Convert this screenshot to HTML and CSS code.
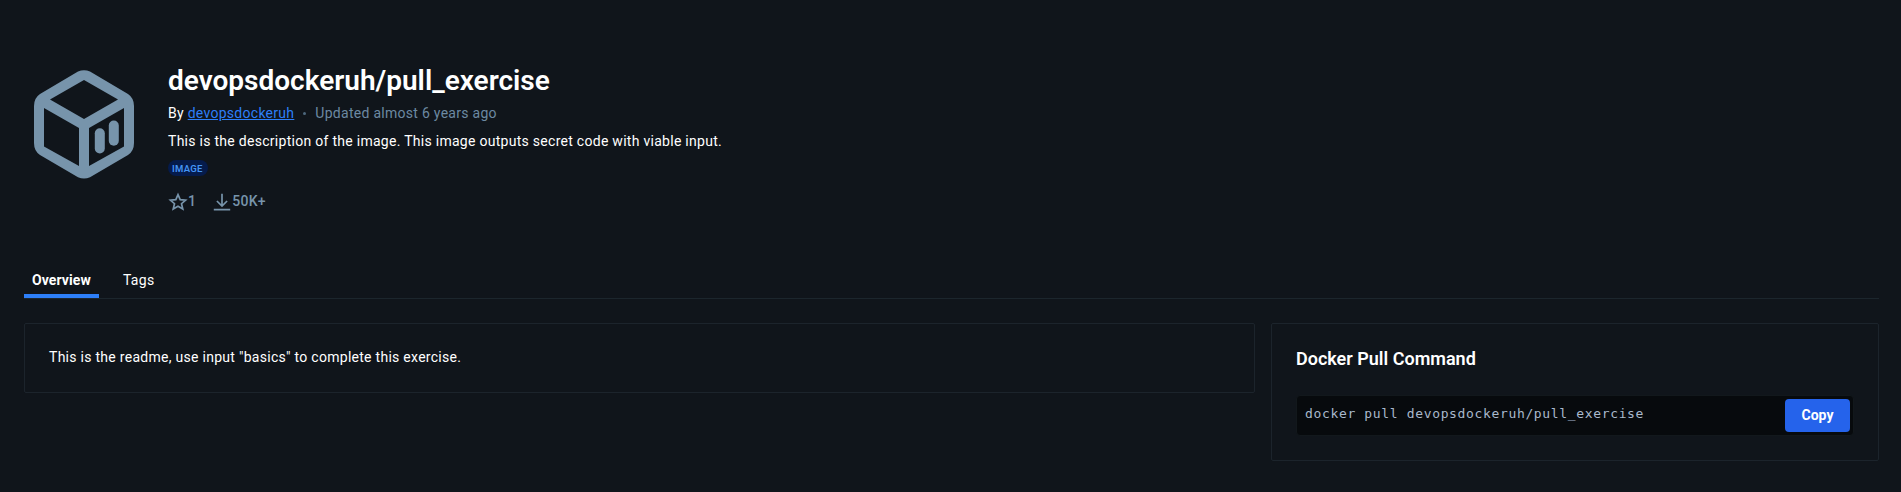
FILE: index.html
```html
<!DOCTYPE html>
<html lang="en">
<head>
<meta charset="utf-8">
<title>devopsdockeruh/pull_exercise</title>
<link rel="stylesheet" href="styles.css">
</head>
<body>
<header class="repo">
  <svg class="repo-logo" viewBox="0 0 100 109">
    <path fill-rule="evenodd" d="M44 1.6Q50-1 56 1.6L94 24Q100 28 100 36V73Q100 81 94 85L56 107.2Q50 109.8 44 107.2L6 85Q0 81 0 73V36Q0 28 6 24ZM50 10L16 29.5 50 49 84 29.5ZM10 38V76.5L45 96V58ZM90 38L55 58V96L90 76.5Z"/>
    <rect x="60.8" y="58.3" width="10" height="25.2" rx="5"/>
    <rect x="74.8" y="50.6" width="10" height="25.2" rx="5"/>
  </svg>
  <div class="repo-info">
    <h1 class="repo-title">devopsdockeruh/pull_exercise</h1>
    <div class="byline"><span>By <a class="owner" href="#">devopsdockeruh</a></span><span class="dot"></span><span class="updated">Updated almost 6 years ago</span></div>
    <p class="description">This is the description of the image. This image outputs secret code with viable input.</p>
    <span class="badge">IMAGE</span>
    <div class="stats">
      <span class="stat"><svg class="stat-icon" viewBox="0 0 20 20"><path d="M10 2.6L12.2 7.6 17.6 8.1 13.5 11.7 14.8 17.1 10 14.3 5.2 17.1 6.5 11.7 2.4 8.1 7.8 7.6Z"/></svg><span>1</span></span>
      <span class="stat"><svg class="stat-icon" viewBox="0 0 20 20"><path d="M10 1.8V14M4.9 9L10 14.1 15.1 9M1.8 17.7H18.2"/></svg><span>50K+</span></span>
    </div>
  </div>
</header>
<nav class="tabs">
  <a class="tab tab-active" href="#">Overview</a>
  <a class="tab" href="#">Tags</a>
</nav>
<main class="content">
  <section class="card readme"><p>This is the readme, use input "basics" to complete this exercise.</p></section>
  <aside class="card pull">
    <h2 class="pull-title">Docker Pull Command</h2>
    <div class="command"><code>docker pull devopsdockeruh/pull_exercise</code><button class="copy">Copy</button></div>
  </aside>
</main>
</body>
</html>
```
FILE: styles.css
```css
* { box-sizing: border-box; }
body {
  margin: 0;
  padding: 0 22px 0 24px;
  background: #10151b;
  color: #fff;
  font: 400 14px/20px Roboto, sans-serif;
  letter-spacing: .28px;
}
h1, h2, p { margin: 0; }
a { color: inherit; text-decoration: none; }
.repo { display: flex; height: 260px; padding: 60px 10px 0; gap: 34px; }
.repo-logo { width: 100px; height: 109px; margin-top: 9.5px; fill: #7794ab; }
.repo-title { font-size: 28px; line-height: 42px; font-weight: 600; letter-spacing: 0; }
.byline { display: flex; align-items: center; margin-top: 1px; }
.owner { color: #2d7ff9; text-decoration: underline; }
.dot { width: 3px; height: 3px; border-radius: 50%; background: #4e687e; margin: 0 9px; }
.updated { color: #6c89a2; }
.description { margin-top: 8px; }
.badge {
  display: block; width: 40px; height: 16px; margin-top: 9px; padding-left: 4px; border-radius: 8px;
  background: #051b4c; color: #4494f5;
  font-size: 9.5px; line-height: 17px; font-weight: 600; letter-spacing: .3px;
}
.stats { display: flex; gap: 16px; margin-top: 15px; color: #7794ab; font-weight: 500; letter-spacing: .25px; }
.stat { display: flex; align-items: center; }
.stat-icon { width: 20px; height: 20px; fill: none; stroke: #7794ab; stroke-width: 1.7; position: relative; top: 1px; }
.tabs { display: flex; gap: 16px; height: 39px; border-bottom: 1px solid #1c262d; }
.tab { padding: 10px 8px 0; height: 38px; }
.tab-active { width: 75px; border-bottom: 4px solid #2d7ff9; font-weight: 700; letter-spacing: .08px; }
.content { display: flex; align-items: flex-start; gap: 16px; margin-top: 24px; }
.card { border: 1px solid #1c242c; border-radius: 2px; }
.readme { width: 1231px; height: 70px; padding: 23px 24px; }
.pull { flex: 1; height: 138px; padding: 21px 24px 0; }
.pull-title { font-size: 18px; line-height: 28px; font-weight: 600; letter-spacing: 0; }
.command {
  display: flex; align-items: flex-start; justify-content: space-between;
  height: 41px; margin-top: 22px; padding: 3px 3px 0 8px;
  background: #070a0d; border: 1px solid #12181c; border-radius: 4px;
}
.command code { margin-top: 5px; color: #a9b9cc; font: 13px/20px "DejaVu Sans Mono", monospace; letter-spacing: .65px; }
.copy {
  width: 65px; height: 33px; border: 0; border-radius: 4px; background: #2563eb; color: #fff;
  font: 700 14px/20px Roboto, sans-serif; padding: 0 0 2px;
}
```
